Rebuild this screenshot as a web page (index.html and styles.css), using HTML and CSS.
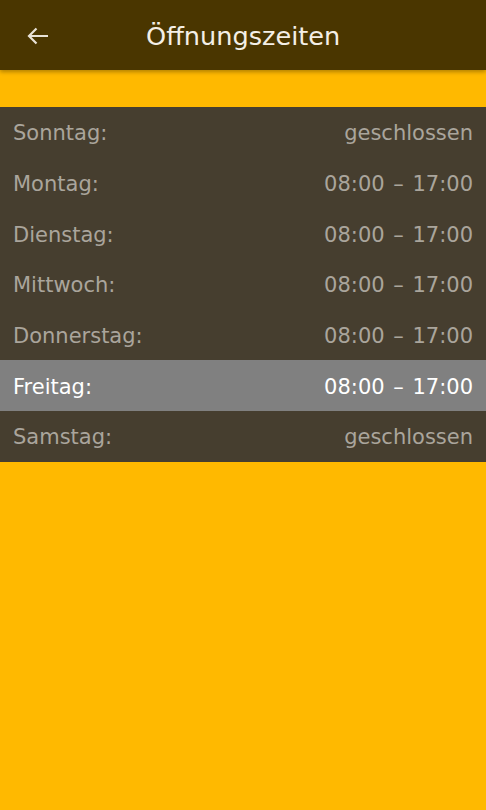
FILE: index.html
```html
<!DOCTYPE html>
<html lang="de">
<head>
<meta charset="utf-8">
<link rel="stylesheet" href="styles.css">
</head>
<body>
<header class="appbar">
  <button class="back" aria-label="Zurück">
    <svg width="22" height="18" viewBox="0 0 22 18"><path d="M21 9H2M9.5 1.5L2 9l7.5 7.5" fill="none" stroke="#e8e2d6" stroke-width="2.2"/></svg>
  </button>
  <h1 class="title">Öffnungszeiten</h1>
</header>
<main class="content">
  <div class="hours">
    <div class="row"><span>Sonntag:</span><span class="time">geschlossen</span></div>
    <div class="row"><span>Montag:</span><span class="time">08:00 – 17:00</span></div>
    <div class="row"><span>Dienstag:</span><span class="time">08:00 – 17:00</span></div>
    <div class="row"><span>Mittwoch:</span><span class="time">08:00 – 17:00</span></div>
    <div class="row"><span>Donnerstag:</span><span class="time">08:00 – 17:00</span></div>
    <div class="row today"><span>Freitag:</span><span class="time">08:00 – 17:00</span></div>
    <div class="row"><span>Samstag:</span><span class="time">geschlossen</span></div>
  </div>
</main>
</body>
</html>
```
FILE: styles.css
```css
html, body {
  margin: 0;
  padding: 0;
  height: 100%;
}
body {
  background: #ffb900;
  font-family: "DejaVu Sans", sans-serif;
}
.appbar {
  height: 70px;
  background: #4a3600;
  display: flex;
  align-items: center;
  box-shadow: 0 2px 4px rgba(0,0,0,0.3);
  position: relative;
}
.back {
  background: none;
  border: none;
  padding: 0;
  margin-left: 27px;
  width: 22px;
  height: 18px;
  display: flex;
  margin-top: 2px;
}
.title {
  margin: 2px 0 0 97px;
  font-weight: normal;
  font-size: 25.6px;
  color: #f4efe6;
}
.content {
  padding-top: 37px;
}
.hours {
  background: #463e2f;
}
.row {
  box-sizing: border-box;
  height: 50.7px;
  display: flex;
  justify-content: space-between;
  align-items: center;
  padding: 2px 13px 0;
  font-size: 21px;
  color: #aaa59c;
}
.time {
  word-spacing: 2px;
}
.row.today {
  background: #808080;
  color: #ffffff;
}
```
